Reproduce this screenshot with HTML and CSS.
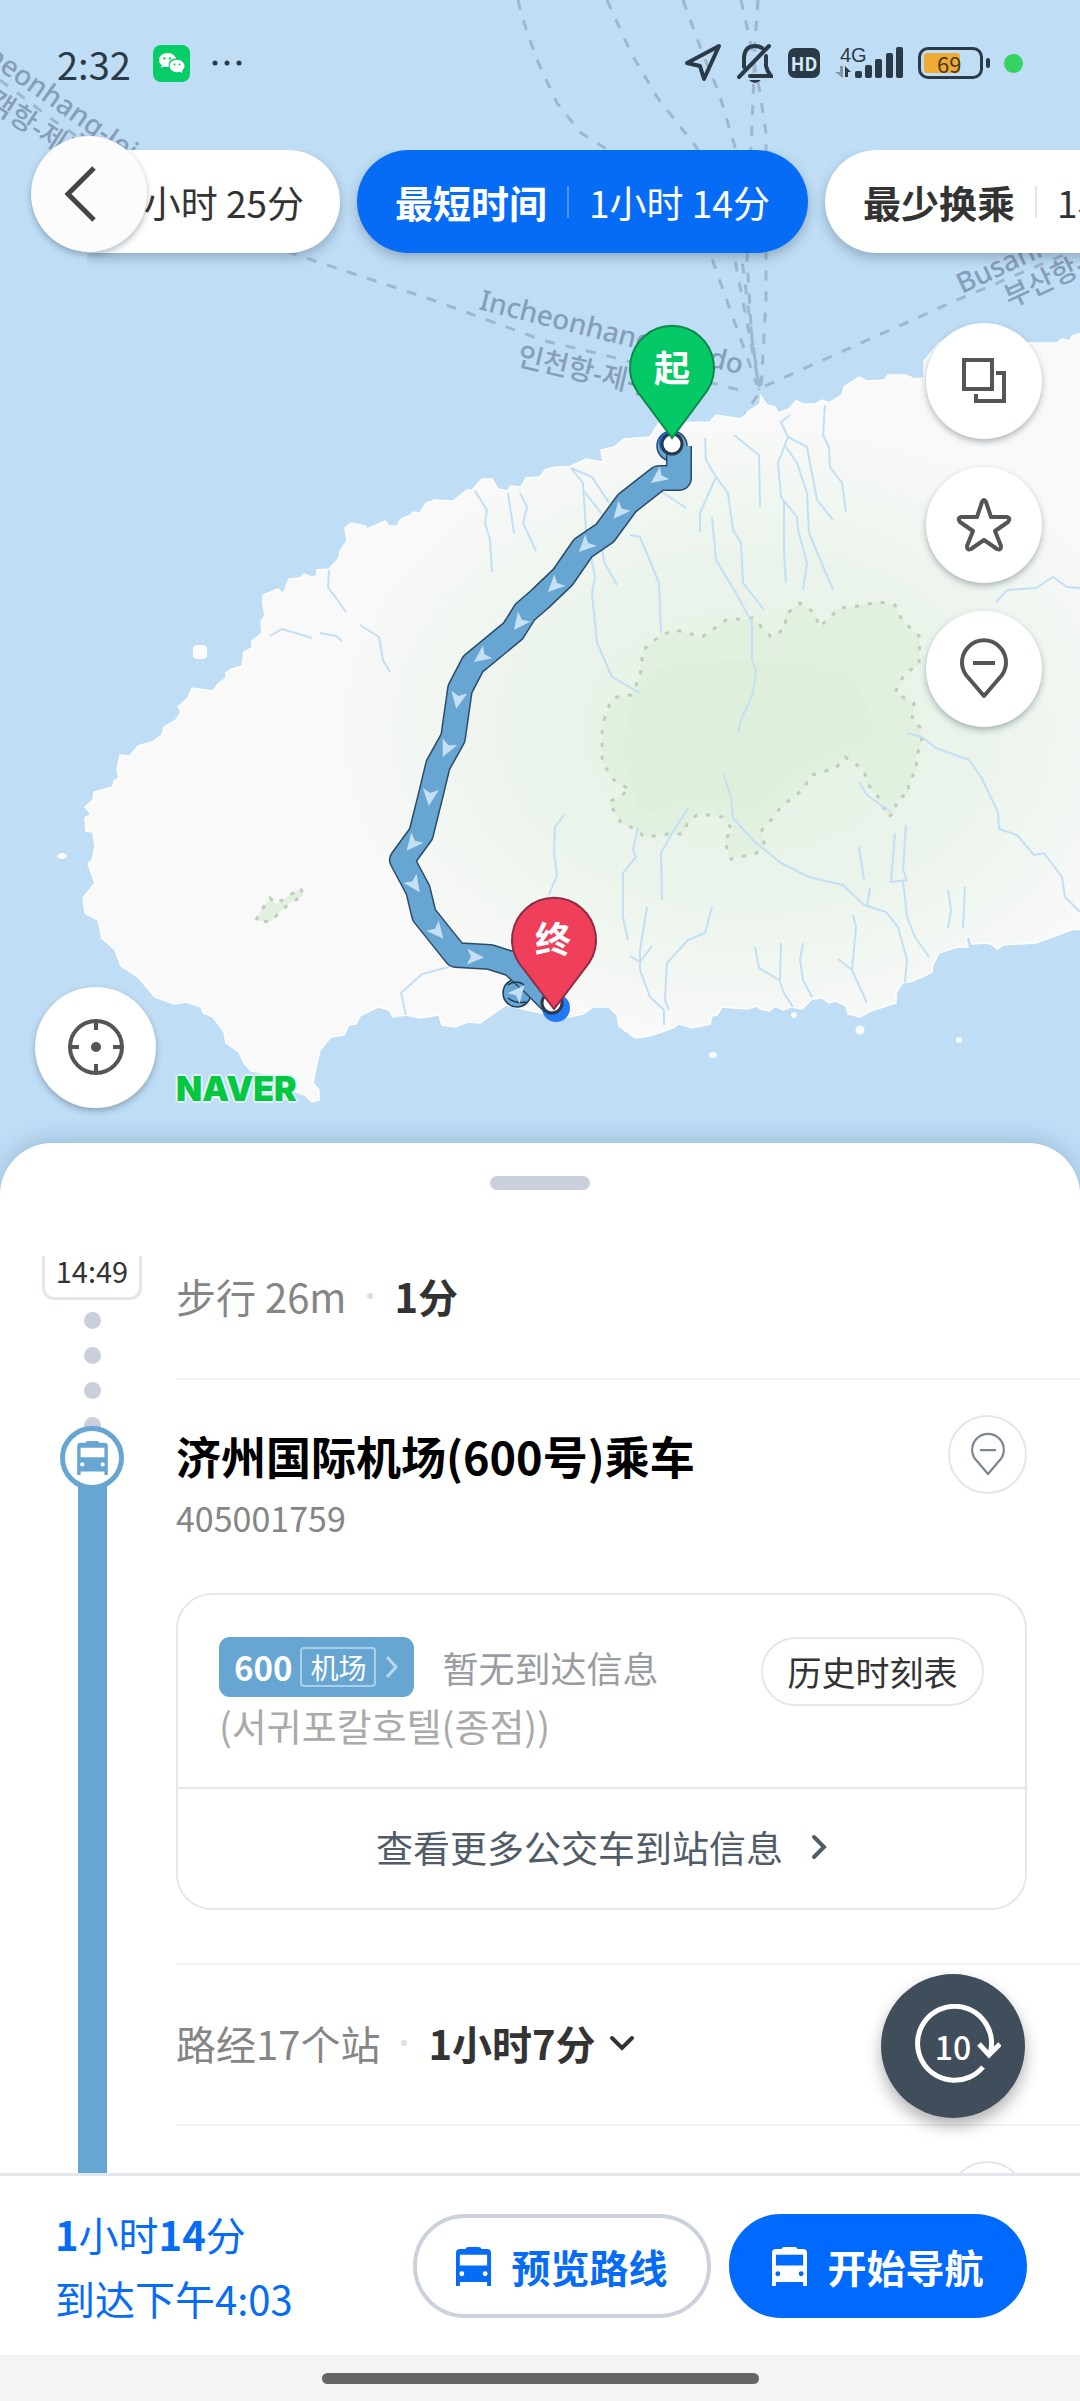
FILE: index.html
```html
<!DOCTYPE html>
<html lang="zh-CN">
<head>
    <meta charset="UTF-8">
    <meta name="viewport" content="width=device-width, initial-scale=1.0">
    <title>公交路线</title>
    <link rel="stylesheet" href="styles.css">
</head>
<body>
    <!-- shared icons -->
    <svg class="defs" aria-hidden="true">
        <symbol id="bus" viewBox="0 0 36 40">
            <path fill="currentColor" fill-rule="evenodd" d="M10 2 Q10 0 13 0 H23 Q26 0 26 2 H32 Q36 2 36 6 V40 H32 V36 H4 V40 H0 V6 Q0 2 4 2 Z M4 8 V19 H32 V8 Z M6 25 A2.5 2.5 0 1 0 6 30 A2.5 2.5 0 1 0 6 25 Z M30 25 A2.5 2.5 0 1 0 30 30 A2.5 2.5 0 1 0 30 25 Z"/>
        </symbol>
        <symbol id="pin" viewBox="0 0 50 62">
            <path fill="none" stroke="currentColor" stroke-linejoin="round" d="M25 58 L7 37 A22 22 0 1 1 43 37 Z M14 25 H36"/>
        </symbol>
        <symbol id="arrow" viewBox="-10 -10 20 20">
            <path fill="#c5e0f4" d="M10 0 L-7 8 L-3 0 L-7 -8 Z"/>
        </symbol>
    </svg>

    <div class="app">
        <section class="map">
            <svg class="map-canvas" viewBox="0 0 1080 1195" preserveAspectRatio="xMidYMin slice" role="img" aria-label="济州岛路线地图">
                <defs>
                    <radialGradient id="hill" gradientUnits="userSpaceOnUse" cx="750" cy="730" r="430" gradientTransform="translate(0 190) scale(1 .74)">
                        <stop offset="0" stop-color="#e5f2e4"/>
                        <stop offset=".55" stop-color="#ebf4eb"/>
                        <stop offset="1" stop-color="#f9f9f9"/>
                    </radialGradient>
                </defs>
                <rect width="1080" height="1195" fill="#bfddf5"/>

                <!-- ferry routes -->
                <g class="ferry">
                    <path d="M518 0 L522 17 L537 60 L557 103 L581 133 L605 148 L700 225 L757 385"/>
                    <path d="M607 0 L631 53 L657 97 L697 148 L735 260 L759 385"/>
                    <path d="M683 0 L702 52 L719 93 L735 147 L742 260 L759 390"/>
                    <path d="M741 0 L750 40 L760 93 L766 133 L766 300 L761 390 L745 414"/>
                    <path d="M758 0 L755 43 L753 100 L751 147 L747 260 L752 340 L760 390"/>
                    <path d="M0 80 L53 120 L165 196 L291 253 L427 298 L545 341 L600 354 L743 391"/>
                    <path d="M765 386 L957 300 L1080 248"/>
                </g>

                <!-- island -->
                <path fill="url(#hill)" stroke="#fdfeff" stroke-width="1.5" d="M176 720 L181 712 L178 707 L188 698 L192 688 L213 691 L218 684 L226 678 L226 673 L232 669 L242 666 L244 652 L252 648 L252 641 L262 633 L261 622 L265 615 L263 605 L263 595 L278 589 L283 594 L289 579 L300 578 L304 574 L312 577 L317 576 L317 570 L329 569 L339 558 L340 551 L347 541 L345 528 L351 523 L365 526 L367 529 L385 521 L389 526 L397 526 L401 519 L411 515 L413 512 L420 513 L426 503 L435 500 L453 501 L467 490 L472 490 L482 479 L492 479 L498 489 L508 491 L510 486 L521 487 L526 478 L540 477 L545 470 L555 467 L569 467 L586 459 L603 462 L601 450 L614 447 L624 439 L650 437 L659 423 L710 422 L716 415 L741 419 L750 410 L760 404 L761 396 L767 405 L775 407 L778 413 L789 409 L796 401 L803 404 L815 404 L822 400 L829 403 L842 395 L844 387 L859 377 L867 381 L884 380 L888 375 L906 375 L914 379 L924 378 L924 361 L939 343 L950 337 L1032 343 L1057 343 L1062 339 L1070 341 L1072 336 L1082 333 V930 L1074 929 L1036 943 L1003 945 L997 949 L993 945 L987 943 L972 944 L970 937 L966 937 L968 947 L957 947 L939 953 L933 965 L932 972 L922 977 L910 982 L903 982 L896 993 L896 1003 L871 1011 L860 1017 L848 1014 L846 1006 L836 1001 L829 1003 L822 998 L812 999 L802 1009 L791 1007 L783 1010 L775 1006 L770 1011 L760 1009 L757 1006 L747 1009 L722 1007 L717 1015 L712 1016 L710 1024 L692 1028 L679 1024 L673 1028 L650 1036 L635 1038 L619 1026 L617 1015 L609 1007 L593 1007 L583 1014 L569 1017 L540 1013 L506 1005 L480 1023 L468 1022 L455 1027 L442 1025 L439 1015 L420 1018 L406 1015 L393 1017 L389 1010 L378 1007 L360 1016 L356 1024 L349 1025 L344 1035 L331 1037 L320 1050 L315 1072 L313 1083 L319 1090 L319 1100 L312 1102 L305 1095 L296 1092 L272 1077 L263 1073 L251 1071 L244 1063 L239 1052 L226 1043 L224 1032 L213 1017 L203 1013 L201 1007 L186 1002 L174 1004 L155 997 L138 977 L121 966 L115 950 L102 938 L98 920 L85 913 L83 898 L95 883 L88 864 L92 860 L95 847 L93 832 L86 831 L85 818 L91 814 L85 807 L93 800 L94 792 L113 787 L114 781 L119 778 L117 770 L120 755 L130 756 L138 746 L152 742 L162 735 L164 727 Z"/>
                <g fill="#f9fbfc">
                    <rect x="193" y="645" width="14" height="14" rx="4"/>
                    <ellipse cx="62" cy="856" rx="5" ry="3"/>
                    <ellipse cx="713" cy="1055" rx="4" ry="3"/>
                    <circle cx="794" cy="1015" r="3"/>
                    <circle cx="860" cy="1030" r="4.5"/>
                    <circle cx="959" cy="1040" r="3"/>
                </g>

                <!-- national park -->
                <path class="park" d="M604 720 L611 700 L617 697 L631 695 L640 677 L643 650 L661 635 L676 630 L702 637 L726 620 L753 618 L771 637 L786 628 L785 615 L800 603 L815 613 L819 627 L840 608 L853 607 L879 602 L895 605 L902 620 L920 637 L919 665 L905 673 L895 693 L914 703 L912 720 L920 727 L922 742 L916 757 L917 770 L908 782 L909 793 L896 800 L896 812 L888 817 L879 798 L867 783 L864 770 L845 757 L836 768 L809 776 L805 788 L781 807 L771 820 L762 830 L764 843 L757 853 L731 859 L724 840 L733 830 L722 817 L709 815 L697 815 L688 822 L683 834 L669 834 L645 837 L633 828 L621 823 L609 802 L630 790 L614 780 L602 762 L602 733 Z"/>
                <path fill="#deefdc" d="M656 668 Q720 655 800 664 Q850 664 860 690 Q875 720 872 740 L840 752 L800 772 L760 812 L730 806 L700 800 L640 815 L625 760 Q620 700 656 668 Z"/>
                <path class="park" d="M256 920 L263 908 L270 898 L276 904 L290 895 L301 888 L303 896 L290 903 L280 912 L270 922 Z"/>

                <!-- streams -->
                <g class="stream">
                    <path d="M705 438 L706 460 L716 477 L728 493 L733 530 L741 543 L743 583 L764 610"/>
                    <path d="M716 477 L700 513 L700 532"/>
                    <path d="M712 517 L716 560 L736 593 L752 623 L752 660 L756 670 L753 693 L741 720 L738 733"/>
                    <path d="M734 435 L759 455 L760 507"/>
                    <path d="M825 405 L823 435 L829 447 L830 467 L842 483 L846 512"/>
                    <path d="M790 415 L781 422 L788 437 L778 463 L781 497 L797 517 L798 530 L807 563 L803 590"/>
                    <path d="M788 437 L807 447 L817 500 L833 520"/>
                    <path d="M786 447 L797 463 L807 493 L809 533 L833 590"/>
                    <path d="M784 500 V553 L786 583"/>
                    <path d="M571 468 L583 483 L586 530 L595 577 L592 593 L597 643 L612 677 L640 693"/>
                    <path d="M571 468 L592 477 L609 503 M583 490 L602 514"/>
                    <path d="M630 535 L640 537 L659 583 L661 633"/>
                    <path d="M602 547 L604 562 L617 585"/>
                    <path d="M659 490 L686 508"/>
                    <path d="M996 602 L1007 590 L1036 588 L1053 577 L1067 587 L1080 588"/>
                    <path d="M329 570 L328 587 L346 612 M360 625 L379 637 L383 660 L390 672"/>
                    <path d="M270 636 L282 629 L312 638 M320 633 L336 636 L342 641"/>
                    <path d="M475 491 L487 510 L485 523 L490 540 L492 572"/>
                    <path d="M508 493 L514 533 M520 493 L527 507 L523 523 L536 551"/>
                    <path d="M907 733 L922 737 L936 748 L969 760 L981 777 L998 812 L999 829 L1017 835 L1034 855 L1044 853 L1062 877 L1065 897 L1080 912"/>
                    <path d="M723 773 L731 797 L733 818 L755 842 L781 863 L809 877 L843 885 L864 905 L886 912 L898 927 L907 960 L905 982"/>
                    <path d="M859 847 L864 880 M870 888 L867 907"/>
                    <path d="M906 825 L903 870 L907 880 L891 882 L895 833 M903 880 L907 917 L915 937 L929 957"/>
                    <path d="M853 915 L856 927 L852 970 L838 959 M852 970 L867 1003"/>
                    <path d="M755 947 L759 968 L779 980 L784 993 L793 1007 M781 943 L780 980"/>
                    <path d="M803 943 L800 960 L803 980 L812 997"/>
                    <path d="M688 808 L671 835 L661 853 L662 900"/>
                    <path d="M638 827 L633 850 L636 857 L623 873 L623 917 L628 940"/>
                    <path d="M647 907 L640 950 L640 970 L650 997 L664 1010 L664 1025 M640 962 L652 946 M640 962 L630 956"/>
                    <path d="M712 907 L705 933 L688 940 L667 963 L665 1000 L669 1010"/>
                    <path d="M564 815 L555 827 L554 853 L557 875 L549 895"/>
                    <path d="M859 782 L867 795 L891 812"/>
                    <path d="M948 890 L951 910 L948 928 M965 887 L963 928"/>
                    <path d="M449 967 L422 974 L401 993 L406 1015"/>
                </g>

                <!-- sea labels -->
                <g class="sea-label">
                    <text transform="translate(-50 36) rotate(35)">Incheonhang-Jeju</text>
                    <text transform="translate(-36 92) rotate(33)">여객항-제주</text>
                    <text transform="translate(478 309) rotate(14)">Incheonhang-Jejudo</text>
                    <text transform="translate(516 365) rotate(13)">인천항-제주도</text>
                    <text transform="translate(962 294) rotate(-25)">Busanhang</text>
                    <text transform="translate(1010 308) rotate(-25)">부산항-</text>
                </g>

                <!-- route -->
                <circle cx="672" cy="446" r="15" fill="#67a6d2" stroke="#2b4a66" stroke-width="1.5"/>
                <circle cx="517" cy="993" r="14" fill="#67a6d2" stroke="#1d3a55" stroke-width="1.5"/>
                <path class="route-edge" d="M679 446 L679 478 L659 478 L627 503 L605 533 L583 548 L563 577 L540 599 L525 612 L513 631 L473 664 L460 689 L453 738 L438 765 L430 798 L421 834 L402 860 L418 890 L424 915 L456 955 L490 957 L512 964 L535 985 L553 1003"/>
                <path class="route-line" d="M679 446 L679 478 L659 478 L627 503 L605 533 L583 548 L563 577 L540 599 L525 612 L513 631 L473 664 L460 689 L453 738 L438 765 L430 798 L421 834 L402 860 L418 890 L424 915 L456 955 L490 957 L512 964 L535 985 L553 1003"/>
                <path fill="none" stroke="#1d3a55" stroke-width="1.5" d="M508 985 A12 12 0 0 1 524 985 M508 998 Q516 1004 526 1002"/>
                <g>
                    <use href="#arrow" width="20" height="20" transform="translate(659 477) rotate(144) translate(-10 -10)"/>
                    <use href="#arrow" width="20" height="20" transform="translate(620 511) rotate(130) translate(-10 -10)"/>
                    <use href="#arrow" width="20" height="20" transform="translate(586 545) rotate(135) translate(-10 -10)"/>
                    <use href="#arrow" width="20" height="20" transform="translate(555 585) rotate(135) translate(-10 -10)"/>
                    <use href="#arrow" width="20" height="20" transform="translate(520 622) rotate(128) translate(-10 -10)"/>
                    <use href="#arrow" width="20" height="20" transform="translate(482 656) rotate(144) translate(-10 -10)"/>
                    <use href="#arrow" width="20" height="20" transform="translate(458 699) rotate(100) translate(-10 -10)"/>
                    <use href="#arrow" width="20" height="20" transform="translate(447 748) rotate(115) translate(-10 -10)"/>
                    <use href="#arrow" width="20" height="20" transform="translate(430 796) rotate(97) translate(-10 -10)"/>
                    <use href="#arrow" width="20" height="20" transform="translate(413 843) rotate(130) translate(-10 -10)"/>
                    <use href="#arrow" width="20" height="20" transform="translate(414 884) rotate(55) translate(-10 -10)"/>
                    <use href="#arrow" width="20" height="20" transform="translate(437 931) rotate(50) translate(-10 -10)"/>
                    <use href="#arrow" width="20" height="20" transform="translate(474 957) rotate(3) translate(-10 -10)"/>
                    <use href="#arrow" width="20" height="20" transform="translate(518 993) rotate(-50) translate(-10 -10)"/>
                </g>
                <circle cx="671" cy="443" r="12" fill="#1368ee"/>
                <circle cx="672" cy="444" r="10" fill="#fff" stroke="#2a3a48" stroke-width="3"/>
                <circle cx="556" cy="1008" r="14" fill="#2279f5"/>
                <circle cx="552" cy="1003" r="10" fill="#fff" stroke="#2a3a48" stroke-width="3"/>

                <!-- start and end markers -->
                <path fill="#04c966" stroke="#0b8a49" stroke-width="2" d="M672 438 L637 391 A42 42 0 1 1 707 391 Z"/>
                <text class="marker-text" x="672" y="382">起</text>
                <path fill="#f03f5b" stroke="#8f2b45" stroke-width="2" d="M554 1009 L519 963 A42 42 0 1 1 589 963 Z"/>
                <text class="marker-text" x="553" y="953">终</text>
            </svg>

            <div class="overlay">
                <header class="status">
                    <span class="clock">2:32</span>
                    <svg width="37" height="37" viewBox="0 0 37 37" aria-hidden="true">
                        <rect width="37" height="37" rx="8" fill="#07cd67"/>
                        <path fill="#fff" d="M14.500 8 C9.500 8 6 11.300 6 15 C6 17.200 7.200 19 8.800 20.300 L8 23 L11 21.500 Q12.500 22 14.500 22 Q15.500 22 16 21.800 C14.500 17 18.500 13.500 23 13.500 C22 10 18.500 8 14.500 8 Z"/>
                        <path fill="#fff" d="M24 14.800 C28.500 14.800 31.500 17.800 31.500 21 C31.500 23 30.400 24.600 29 25.700 L29.600 28 L27 26.800 Q25.600 27.200 24 27.200 C19.600 27.200 16.700 24.300 16.700 21 C16.700 17.700 19.600 14.800 24 14.800 Z"/>
                        <g fill="#07cd67"><circle cx="11.500" cy="13.500" r="1.200"/><circle cx="17" cy="13.500" r="1.200"/><circle cx="21.500" cy="19.500" r="1"/><circle cx="26.500" cy="19.500" r="1"/></g>
                    </svg>
                    <svg width="30" height="6" viewBox="0 0 30 6" fill="#2b3a47" aria-hidden="true"><circle cx="3" cy="3" r="2.500"/><circle cx="15" cy="3" r="2.500"/><circle cx="27" cy="3" r="2.500"/></svg>

                    <div class="status-right">
                        <svg width="38" height="40" viewBox="0 0 38 40" aria-hidden="true"><path fill="none" stroke="#2b3a47" stroke-width="4" stroke-linejoin="round" d="M35 3 L3 20 L16 23 L20 36 Z"/></svg>
                        <svg width="36" height="40" viewBox="0 0 36 40" fill="none" stroke="#2b3a47" stroke-width="4" stroke-linecap="round" aria-hidden="true">
                            <path d="M32 3 L2 34 M7 24 V14 Q8 3 18 3 Q22 3 25 5 M29 13 V23 Q30 28 34 33 H13"/>
                            <path fill="#2b3a47" stroke="none" d="M12 37 H24 Q18 43 12 37 Z"/>
                        </svg>
                        <span class="hd">HD</span>
                        <span class="signal">
                            <span class="net">4G</span>
                            <svg width="68" height="32" viewBox="0 0 68 32" fill="#2b3a47" aria-hidden="true">
                                <path fill="#8296a6" d="M5 19 H8 V31 L0 25 H5 Z"/><path d="M10 19 L16 25 H13 V30 H10 Z"/>
                                <rect x="20" y="24" width="7" height="7" rx="2"/><rect x="30" y="18" width="7" height="13" rx="2"/><rect x="40" y="12" width="7" height="19" rx="2"/><rect x="51" y="6" width="7" height="25" rx="2"/><rect x="61" y="0" width="7" height="31" rx="2"/>
                            </svg>
                        </span>
                        <span class="battery"><span class="level">69</span></span>
                        <span class="live"></span>
                    </div>
                </header>

                <nav class="topbar">
                    <button class="round back" aria-label="返回">
                        <svg width="34" height="56" viewBox="0 0 34 56" aria-hidden="true"><path fill="none" stroke="#444" stroke-width="5" d="M30 2 L4 28 L30 54"/></svg>
                    </button>
                    <div class="chips">
                        <button class="chip chip-cut">1小时 25分</button>
                        <button class="chip active"><b>最短时间</b><i></i>1小时 14分</button>
                        <button class="chip"><b>最少换乘</b><i></i>1小时 20分</button>
                    </div>
                </nav>

                <div class="tools">
                    <button class="round" aria-label="图层">
                        <svg width="46" height="46" viewBox="0 0 46 46" fill="none" stroke="#555" stroke-width="4" aria-hidden="true"><rect x="3" y="2" width="28" height="29"/><path d="M35 15 H43 V43 H15 V36"/></svg>
                    </button>
                    <button class="round" aria-label="收藏">
                        <svg width="56" height="54" viewBox="0 0 56 54" aria-hidden="true"><path fill="none" stroke="#555" stroke-width="4" stroke-linejoin="round" d="M26 4 Q28 0 30 4 L35 19 H51 Q55 20 52 24 L39 33 L45 48 Q45 53 41 51 L28 42 L15 51 Q11 53 11 48 L17 33 L4 24 Q1 20 5 19 H21 Z"/></svg>
                    </button>
                    <button class="round" aria-label="地点">
                        <svg class="pin-large" aria-hidden="true"><use href="#pin"/></svg>
                    </button>
                </div>

                <div class="map-foot">
                    <button class="round locate" aria-label="定位">
                        <svg width="58" height="58" viewBox="0 0 58 58" fill="none" stroke="#555" stroke-width="4" aria-hidden="true"><circle cx="29" cy="29" r="26"/><path d="M29 3 V12 M29 46 V55 M3 29 H12 M46 29 H55"/><circle cx="29" cy="29" r="5" fill="#555" stroke="none"/></svg>
                    </button>
                    <span class="naver">NAVER</span>
                </div>
            </div>
        </section>

        <main class="sheet">
            <div class="handle"></div>
            <div class="scroll">
                <div class="rail">
                    <time class="time">14:49</time>
                    <div class="dots"><span></span><span></span><span></span><span></span></div>
                    <div class="rail-bus"><svg aria-hidden="true"><use href="#bus"/></svg></div>
                    <div class="rail-line"></div>
                </div>
                <div class="steps">
                    <section class="step walk">步行 26m<i class="sep"></i><b>1分</b></section>

                    <section class="stop">
                        <div class="stop-head">
                            <div class="stop-info">
                                <h2>济州国际机场(600号)乘车</h2>
                                <p>405001759</p>
                            </div>
                            <button class="pin-button" aria-label="查看站点"><svg aria-hidden="true"><use href="#pin"/></svg></button>
                        </div>
                        <div class="card">
                            <div class="card-top">
                                <div>
                                    <div class="arrival">
                                        <a href="#" class="line">600<span>机场</span>
                                            <svg width="12" height="22" viewBox="0 0 12 22" aria-hidden="true"><path fill="none" stroke="#b5d8ee" stroke-width="3" d="M1 1 L10 11 L1 21"/></svg>
                                        </a>
                                        <span class="none">暂无到达信息</span>
                                    </div>
                                    <p class="dest">(서귀포칼호텔(종점))</p>
                                </div>
                                <button class="history">历史时刻表</button>
                            </div>
                            <button class="more">查看更多公交车到站信息
                                <svg width="16" height="26" viewBox="0 0 16 26" aria-hidden="true"><path fill="none" stroke="#515c69" stroke-width="4" stroke-linecap="round" d="M3 3 L13 13 L3 23"/></svg>
                            </button>
                        </div>
                    </section>

                    <section class="step ride">路经17个站<i class="sep"></i><b>1小时7分</b>
                        <svg width="26" height="16" viewBox="0 0 26 16" aria-hidden="true"><path fill="none" stroke="#333" stroke-width="4" stroke-linecap="round" d="M3 3 L13 13 L23 3"/></svg>
                    </section>
                    <div class="next">
                        <button class="pin-button" aria-label="查看下一站"><svg aria-hidden="true"><use href="#pin"/></svg></button>
                    </div>
                </div>
            </div>
            <button class="refresh" aria-label="10秒后刷新">
                <svg width="96" height="84" viewBox="0 0 96 84" fill="none" stroke="#fff" stroke-width="5" aria-hidden="true"><path d="M78 63 A37 37 0 1 1 85 50"/><path d="M74 40 L84 51 L95 40"/></svg>
                <span>10</span>
            </button>
        </main>

        <footer class="bottom">
            <div class="summary">
                <p><b>1</b>小时<b>14</b>分</p>
                <p>到达下午4:03</p>
            </div>
            <button class="action"><svg aria-hidden="true"><use href="#bus"/></svg>预览路线</button>
            <button class="action primary"><svg aria-hidden="true"><use href="#bus"/></svg>开始导航</button>
        </footer>
        <div class="gesture"><span></span></div>
    </div>
</body>
</html>
```
FILE: styles.css
```css
*{
    box-sizing: border-box;
}
body{
    margin: 0;
    background-color: white;
    color: #333;
    font-family: "Noto Sans CJK SC", "Noto Sans CJK KR", sans-serif;
    font-size: 39px;
}
h2, p{
    margin: 0;
    font-weight: normal;
}
button{
    border: 0;
    padding: 0;
    color: inherit;
    font: inherit;
    background-color: white;
    cursor: pointer;
}
svg{
    flex: none;
}
.defs{
    position: absolute;
    width: 0;
    height: 0;
}
.app{
    display: flex;
    flex-direction: column;
    height: 100vh;
    overflow: hidden;
}

/* map */
.map{
    display: grid;
    flex: none;
    aspect-ratio: 1080 / 1195;
}
.map-canvas, .overlay{
    grid-area: 1 / 1;
    width: 100%;
    height: 100%;
    min-width: 0;
}
.ferry{
    fill: none;
    stroke: #9fb7ce;
    stroke-width: 3;
    stroke-dasharray: 10 11;
}
.stream{
    fill: none;
    stroke: #c2dff5;
    stroke-width: 2;
    stroke-linejoin: round;
}
.park{
    fill: #e1f0df;
    stroke: #bccdb9;
    stroke-width: 3;
    stroke-dasharray: 4 9;
}
.sea-label{
    fill: #869eb8;
    font-family: "Noto Sans", "Noto Sans CJK KR", sans-serif;
    font-size: 28px;
    font-weight: 500;
}
.route-edge, .route-line{
    fill: none;
    stroke: #2b4a66;
    stroke-width: 26px;
    stroke-linejoin: round;
}
.route-line{
    stroke: #67a6d2;
    stroke-width: 23px;
}
.marker-text{
    fill: white;
    font-size: 36px;
    font-weight: bold;
    text-anchor: middle;
}
.overlay{
    display: flex;
    flex-direction: column;
}

.status{
    display: flex;
    align-items: center;
    height: 126px;
    padding: 0 57px;
    gap: 22px;
    color: #2b3a47;
}
.clock{
    font-size: 38px;
}
.status-right{
    display: flex;
    align-items: center;
    gap: 15px;
    margin-left: auto;
}
.hd{
    width: 32px;
    border-radius: 7px;
    background-color: #2b3a47;
    color: #d6e9f8;
    font-size: 18px;
    line-height: 30px;
    font-weight: bold;
    text-align: center;
}
.signal{
    display: grid;
}
.signal > *{
    grid-area: 1 / 1;
}
.net{
    font-family: "Liberation Sans", sans-serif;
    font-size: 20px;
    line-height: 16px;
    padding-left: 5px;
}
.battery{
    position: relative;
    width: 65px;
    height: 32px;
    margin-right: 6px;
    border: 3px solid #2b3a47;
    border-radius: 10px;
    padding: 3px;
}
.battery::after{
    content: "";
    position: absolute;
    right: -10px;
    top: 8px;
    width: 4px;
    height: 10px;
    border-radius: 2px;
    background-color: #2b3a47;
}
.level{
    display: block;
    width: 36px;
    border-radius: 3px;
    background-color: #f0ab35;
    color: #4a3a1c;
    font-size: 22px;
    line-height: 20px;
    padding-left: 13px;
}
.live{
    width: 19px;
    height: 19px;
    border-radius: 50%;
    background-color: #35d364;
}

.topbar{
    position: relative;
    padding: 24px 0 0 87px;
}
.round{
    display: flex;
    align-items: center;
    justify-content: center;
    width: 116px;
    height: 116px;
    border-radius: 50%;
    box-shadow: 0 3px 6px rgba(40, 60, 80, 0.35);
}
.back{
    position: absolute;
    left: 31px;
    top: 10px;
    z-index: 1;
    padding-right: 16px;
    background-color: #fcfcfc;
}
.chips{
    display: flex;
    gap: 17px;
    padding-bottom: 20px;
    overflow: hidden;
}
.chip{
    display: flex;
    flex: none;
    align-items: center;
    height: 103px;
    padding: 0 38px;
    border-radius: 52px;
    font-size: 37px;
    white-space: nowrap;
    box-shadow: 0 5px 12px rgba(40, 60, 80, 0.3);
}
.chip b{
    font-size: 38px;
}
.chip i{
    width: 2px;
    height: 32px;
    margin: 0 20px;
    background-color: #e3e5e8;
}
.chip-cut{
    justify-content: flex-end;
    width: 253px;
    padding: 0 36px 0 0;
    border-radius: 0 52px 52px 0;
}
.active{
    background-color: #076cf5;
    color: white;
}
.active i{
    background-color: #4d95f9;
}
.tools{
    display: flex;
    flex-direction: column;
    gap: 28px;
    align-self: flex-end;
    margin: 50px 38px 0 0;
}
.pin-large{
    width: 50px;
    height: 62px;
    color: #555;
    stroke-width: 4px;
}
.map-foot{
    display: flex;
    align-items: center;
    gap: 20px;
    margin-top: auto;
    padding: 0 0 86px 35px;
}
.locate{
    width: 121px;
    height: 121px;
}
.naver{
    padding-top: 84px;
    color: #04c83f;
    font-family: Inter, sans-serif;
    font-size: 34px;
    line-height: 40px;
    font-weight: 900;
    text-shadow: 2px 0 #e6f4fc, -2px 0 #e6f4fc, 0 2px #e6f4fc, 0 -2px #e6f4fc;
}

/* bottom sheet */
.sheet{
    position: relative;
    display: flex;
    flex: 1;
    flex-direction: column;
    min-height: 0;
    margin-top: -52px;
    border-radius: 52px 52px 0 0;
    background-color: white;
    box-shadow: 0 -4px 20px rgba(60, 100, 130, 0.25);
}
.handle{
    flex: none;
    width: 100px;
    height: 14px;
    margin: 33px auto 66px;
    border-radius: 7px;
    background-color: #c9d0dc;
}
.scroll{
    display: flex;
    flex: 1;
    min-height: 0;
    overflow: hidden;
}
.rail{
    display: flex;
    flex: none;
    flex-direction: column;
    align-items: center;
    width: 176px;
    padding: 0 34px 0 42px;
}
.time{
    flex: none;
    width: 100px;
    height: 60px;
    margin-top: -16px;
    border: 3px solid #e4e5e7;
    border-radius: 12px;
    font-size: 29px;
    line-height: 54px;
    text-align: center;
}
.dots{
    display: flex;
    flex-direction: column;
    gap: 18px;
    margin-top: 12px;
}
.dots span{
    width: 17px;
    height: 17px;
    border-radius: 50%;
    background-color: #c9d0dc;
}
.rail-bus{
    position: relative;
    display: flex;
    flex: none;
    align-items: center;
    justify-content: center;
    width: 64px;
    height: 64px;
    margin: -8px 0 -4px;
    border: 5px solid #67a6d2;
    border-radius: 50%;
    background-color: white;
    color: #67a6d2;
}
.rail-bus svg{
    width: 31px;
    height: 34px;
}
.rail-line{
    flex: 1;
    width: 29px;
    background-color: #67a6d2;
}
.steps{
    flex: 1;
    min-width: 0;
}
.step{
    display: flex;
    align-items: center;
    border-bottom: 2px solid #f2f3f4;
    color: #858585;
    font-size: 40px;
    line-height: 56px;
}
.step b{
    color: #333;
}
.sep{
    width: 6px;
    height: 6px;
    margin: 0 21px;
    border-radius: 50%;
    background-color: #dcdee1;
}
.walk{
    height: 124px;
    padding-bottom: 42px;
}
.stop-head{
    display: flex;
    justify-content: space-between;
    padding: 35px 53px 0 0;
}
.stop-info{
    padding-top: 11px;
}
.stop-info h2{
    color: black;
    font-size: 45px;
    line-height: 60px;
    font-weight: bold;
}
.stop-info p{
    margin-top: 10px;
    color: #858585;
    font-size: 34px;
    line-height: 44px;
}
.pin-button{
    display: flex;
    flex: none;
    align-items: center;
    justify-content: center;
    width: 79px;
    height: 79px;
    border: 2px solid #e4e6e9;
    border-radius: 50%;
    color: #7a8494;
}
.pin-button svg{
    width: 36px;
    height: 45px;
    stroke-width: 3px;
}
.card{
    margin: 53px 53px 53px 0;
    border: 2px solid #e5e7ea;
    border-radius: 36px;
}
.card-top{
    display: flex;
    align-items: flex-start;
    justify-content: space-between;
    padding: 42px 41px 36px;
}
.arrival{
    display: flex;
    align-items: center;
}
.line{
    display: flex;
    align-items: center;
    height: 60px;
    padding: 0 16px 0 15px;
    border-radius: 11px;
    background-color: #67a6d2;
    color: white;
    font-size: 33px;
    font-weight: bold;
    text-decoration: none;
}
.line span{
    margin: 0 10px 0 8px;
    padding: 0 8px;
    border: 2px solid #a9d0ea;
    border-radius: 4px;
    font-size: 28px;
    line-height: 36px;
    font-weight: normal;
}
.none{
    margin-left: 28px;
    color: #999ca3;
    font-size: 36px;
}
.dest{
    margin-top: 2px;
    color: #aaa;
    font-family: "Noto Sans CJK KR", sans-serif;
    font-size: 38px;
    line-height: 52px;
}
.history{
    width: 223px;
    height: 69px;
    border: 2px solid #e5e7ea;
    border-radius: 35px;
    font-size: 34px;
}
.more{
    display: flex;
    align-items: center;
    justify-content: center;
    gap: 28px;
    width: 100%;
    height: 121px;
    padding-bottom: 4px;
    border-top: 2px solid #e5e7ea;
    border-radius: 0 0 34px 34px;
    color: #515c69;
    font-size: 37px;
}
.ride{
    height: 163px;
    padding-bottom: 3px;
    border-top: 2px solid #f2f3f4;
}
.ride svg{
    margin-left: 13px;
}
.next{
    display: flex;
    justify-content: flex-end;
    padding: 35px 53px 0 0;
}
.refresh{
    position: absolute;
    right: 55px;
    bottom: 55px;
    display: grid;
    place-items: center;
    width: 144px;
    height: 144px;
    border-radius: 50%;
    background-color: #404d5a;
    color: white;
    font-size: 32px;
    line-height: 40px;
    font-weight: 500;
    box-shadow: 0 8px 16px rgba(0, 0, 0, 0.3);
}
.refresh > *{
    grid-area: 1 / 1;
}

/* summary bar */
.bottom{
    position: relative;
    display: flex;
    flex: none;
    align-items: center;
    gap: 18px;
    padding: 38px 53px 37px 55px;
    border-top: 3px solid #e3e6ec;
    background-color: white;
    color: #076cf5;
}
.summary{
    margin-right: auto;
    font-size: 40px;
    line-height: 40px;
}
.summary p + p{
    margin-top: 24px;
}
.action{
    display: flex;
    align-items: center;
    justify-content: center;
    gap: 20px;
    width: 298px;
    height: 104px;
    border: 4px solid #ccd2dc;
    border-radius: 52px;
    font-weight: bold;
}
.action svg{
    width: 35px;
    height: 39px;
}
.primary{
    border-color: #006aff;
    background-color: #006aff;
    color: white;
}
.gesture{
    display: flex;
    flex: none;
    align-items: center;
    justify-content: center;
    height: 46px;
    background-color: #f4f4f4;
}
.gesture span{
    width: 437px;
    height: 11px;
    border-radius: 6px;
    background-color: #666;
}
```
